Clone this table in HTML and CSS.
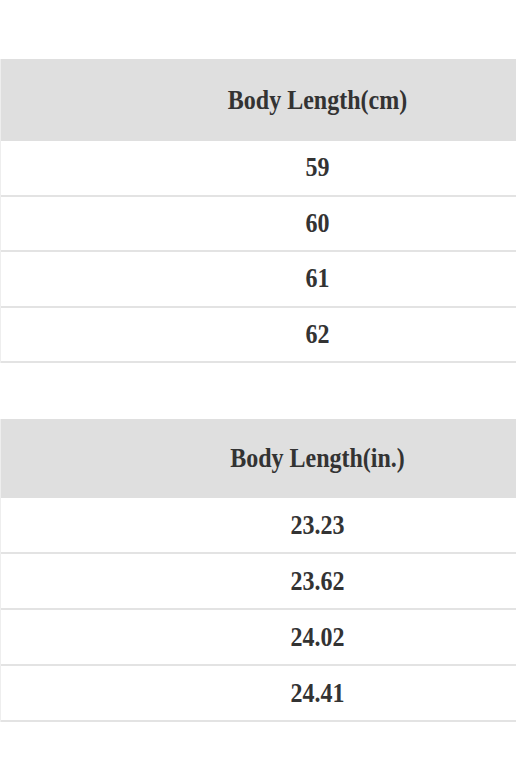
FILE: index.html
```html
<!DOCTYPE html>
<html>
<head>
<meta charset="utf-8">
<link rel="stylesheet" href="styles.css">
</head>
<body>
<div class="page">
  <div class="table table-cm">
    <div class="head"><span class="txt">Body Length(cm)</span></div>
    <div class="row"><span class="txt">59</span></div>
    <div class="row"><span class="txt">60</span></div>
    <div class="row"><span class="txt">61</span></div>
    <div class="row"><span class="txt">62</span></div>
  </div>
  <div class="table table-in">
    <div class="head"><span class="txt">Body Length(in.)</span></div>
    <div class="row"><span class="txt">23.23</span></div>
    <div class="row"><span class="txt">23.62</span></div>
    <div class="row"><span class="txt">24.02</span></div>
    <div class="row"><span class="txt">24.41</span></div>
  </div>
</div>
</body>
</html>
```

FILE: styles.css
```css
html, body {
  margin: 0;
  padding: 0;
  background: #ffffff;
  overflow: hidden;
}
.page {
  width: 516px;
  height: 771px;
  display: flex;
  flex-direction: column;
  padding-top: 59px;
  box-sizing: border-box;
}
.table {
  display: flex;
  flex-direction: column;
  border-left: 1px solid #eeeeee;
}
.table-in {
  margin-top: 56px;
}
.head, .row {
  display: flex;
  align-items: center;
  justify-content: center;
  padding-left: 118px;
  box-sizing: border-box;
  flex: none;
}
.head {
  background: #dfdfdf;
  height: 82px;
}
.table-in .head {
  height: 79px;
}
.row {
  height: 55.5px;
  border-bottom: 2px solid #e3e3e3;
  background: #ffffff;
}
.table-in .row {
  height: 56px;
}
.txt {
  display: inline-block;
  font-family: "Liberation Serif", "Times New Roman", serif;
  font-weight: bold;
  font-size: 24px;
  color: #333333;
  transform: scaleY(1.17);
}
```
